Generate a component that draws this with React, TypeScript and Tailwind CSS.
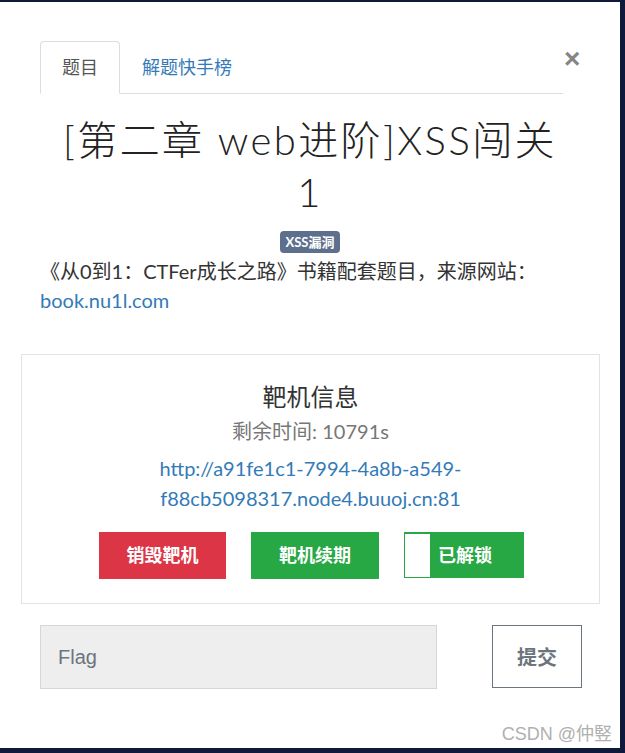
import { useState } from 'react'

const SANS = "font-['Lato','Noto_Sans_CJK_SC',sans-serif]"

function Tabs({ active, onChange }: { active: number; onChange: (i: number) => void }) {
  const tabs = ['题目', '解题快手榜']
  return (
    <div className="flex items-start">
      <ul className="flex flex-1 border-b border-[#dddddd]">
        {tabs.map((t, i) => (
          <li key={t} className="-mb-px">
            <button
              onClick={() => onChange(i)}
              className={
                i === active
                  ? 'h-[53px] px-[21px] text-[18px] text-[#555555] bg-white border border-[#dddddd] border-b-transparent rounded-t-[4px]'
                  : 'h-[53px] px-[21px] text-[18px] text-[#337ab7] border border-transparent'
              }
            >
              {t}
            </button>
          </li>
        ))}
      </ul>
      <button className="w-[16px] mt-[4px] ml-px text-[28px] leading-[28px] font-bold text-[#858585] font-['Liberation_Sans',sans-serif]">
        ×
      </button>
    </div>
  )
}

export default function App() {
  const [tab, setTab] = useState(0)
  const [flag, setFlag] = useState('')

  return (
    <div className={`w-[625px] h-[753px] bg-[#0f1a3b] pt-[2px] ${SANS}`}>
      <div className="relative w-[620px] h-[746px] bg-white px-[40px] pt-[39px] flex flex-col">
        <Tabs active={tab} onChange={setTab} />

        {/* Challenge title */}
        <h1 className="mt-[20px] text-center text-[40px] leading-[52px] font-light tracking-[0.06em] text-[#222222]">
          [第二章 web进阶]XSS闯关
          <br />1
        </h1>

        <div className="mt-[13px] flex justify-center">
          <span className="h-[22px] px-[6px] rounded-[4px] bg-[#5d6f8c] text-white text-[13px] font-bold leading-[22px]">
            XSS漏洞
          </span>
        </div>

        <p className="mt-[4px] text-[20px] leading-[29px] text-[#333333]">
          《从0到1：CTFer成长之路》书籍配套题目，来源网站：
          <a className="text-[#337ab7]">book.nu1l.com</a>
        </p>

        {/* Target machine card */}
        <div className="-ml-[19px] -mr-[20px] mt-[39px] border border-[#e3e3e3] pt-[25px] pb-[24px] flex flex-col items-center">
          <h3 className="text-[24px] leading-[34px] text-[#333333]">靶机信息</h3>
          <p className="mt-[2px] text-[20px] leading-[30px] text-[#777777]">剩余时间: 10791s</p>
          <a className="mt-[7px] w-[320px] text-center text-[20px] leading-[30px] text-[#337ab7]">
            http://a91fe1c1-7994-4a8b-a549-f88cb5098317.node4.buuoj.cn:81
          </a>
          <div className="mt-[19px] ml-[2px] flex items-start gap-[25px]">
            <button className="w-[127px] h-[47px] bg-[#dc3545] text-white text-[18px] font-bold">
              销毁靶机
            </button>
            <button className="w-[128px] h-[47px] bg-[#28a745] text-white text-[18px] font-bold">
              靶机续期
            </button>
            <button className="w-[120px] h-[46px] bg-[#28a745] border border-[#28a745] flex items-center text-white text-[18px] font-bold">
              <span className="w-[25px] h-[43px] bg-white" />
              <span className="pl-[8px]">已解锁</span>
            </button>
          </div>
        </div>

        {/* Flag submit */}
        <div className="mt-[21px] flex items-start">
          <input
            value={flag}
            onChange={(e) => setFlag(e.target.value)}
            placeholder="Flag"
            className="w-[397px] h-[64px] shrink-0 bg-[#eeeeee] border border-[#d3d6da] pl-[17px] text-[20px] text-[#555555] placeholder:text-[#6c757d] outline-none font-['Liberation_Sans',sans-serif]"
          />
          <button className="ml-[55px] w-[90px] h-[63px] shrink-0 border border-[#6c757d] bg-white text-[#6c757d] text-[20px] font-bold">
            提交
          </button>
        </div>

        <span className="absolute right-[8px] bottom-0 text-[18px] text-[#b0b0b0] font-['Liberation_Sans','Noto_Sans_CJK_SC',sans-serif]">
          CSDN @仲竪
        </span>
      </div>
    </div>
  )
}
